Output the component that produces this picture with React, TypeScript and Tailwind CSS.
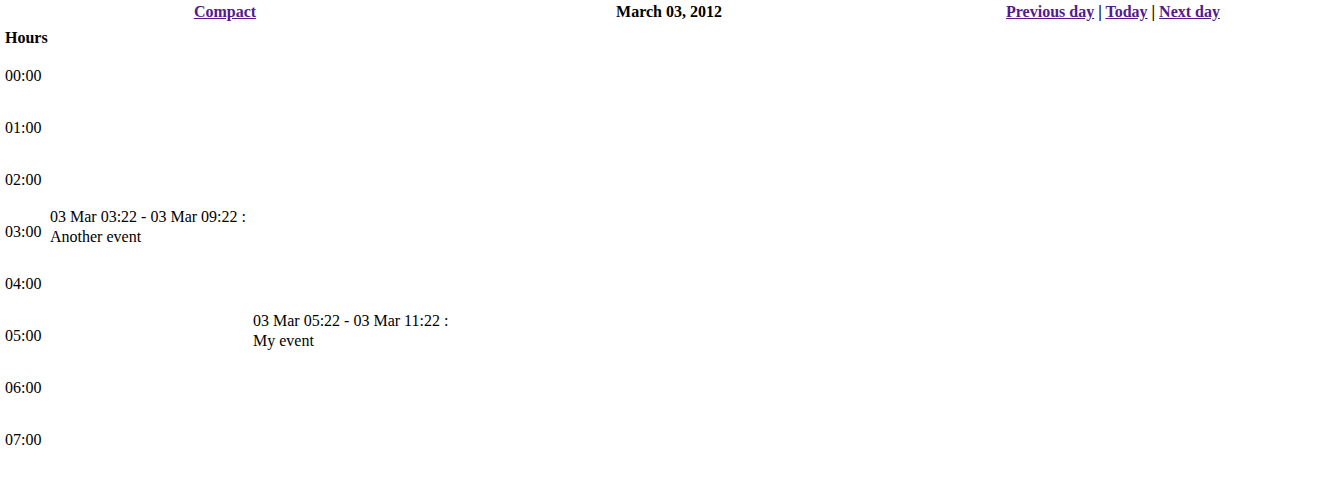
import React from 'react';

const hours = ['00:00', '01:00', '02:00', '03:00', '04:00', '05:00', '06:00', '07:00'];

const events = [
  { hour: 3, col: 0, range: '03 Mar 03:22 - 03 Mar 09:22 :', title: 'Another event' },
  { hour: 5, col: 1, range: '03 Mar 05:22 - 03 Mar 11:22 :', title: 'My event' },
];

const linkCls = 'text-[#551a8b] underline font-bold';

const App: React.FC = () => {
  return (
    <div
      className="w-[1342px] h-[481px] bg-white text-black text-[16px] leading-[18px]"
      style={{ fontFamily: '"Liberation Serif", "Times New Roman", serif' }}
    >
      {/* top bar */}
      <div className="grid grid-cols-[446px_442px_446px] pl-[2px] h-[24px] pt-[3px] font-bold">
        <div className="text-center">
          <a href="#" className={linkCls}>Compact</a>
        </div>
        <div className="text-center">March 03, 2012</div>
        <div className="text-center">
          <a href="#" className={linkCls}>Previous day</a> |{' '}
          <a href="#" className={linkCls}>Today</a> |{' '}
          <a href="#" className={linkCls}>Next day</a>
        </div>
      </div>

      {/* day table */}
      <div className="pl-[5px]">
        <div className="h-[26px] pt-[5px] font-bold">Hours</div>
        {hours.map((h, i) => {
          const rowEvents = events.filter(e => e.hour === i);
          return (
            <div key={h} className="grid grid-cols-[45px_203px_1fr] h-[52px]">
              <div className="flex items-center">{h}</div>
              {[0, 1].map(c => {
                const ev = rowEvents.find(e => e.col === c);
                return (
                  <div key={c} className="flex items-center pb-[10px]">
                    {ev && (
                      <div className="leading-[20px]">
                        <div>{ev.range}</div>
                        <div>{ev.title}</div>
                      </div>
                    )}
                  </div>
                );
              })}
            </div>
          );
        })}
      </div>
    </div>
  );
};

export default App;
